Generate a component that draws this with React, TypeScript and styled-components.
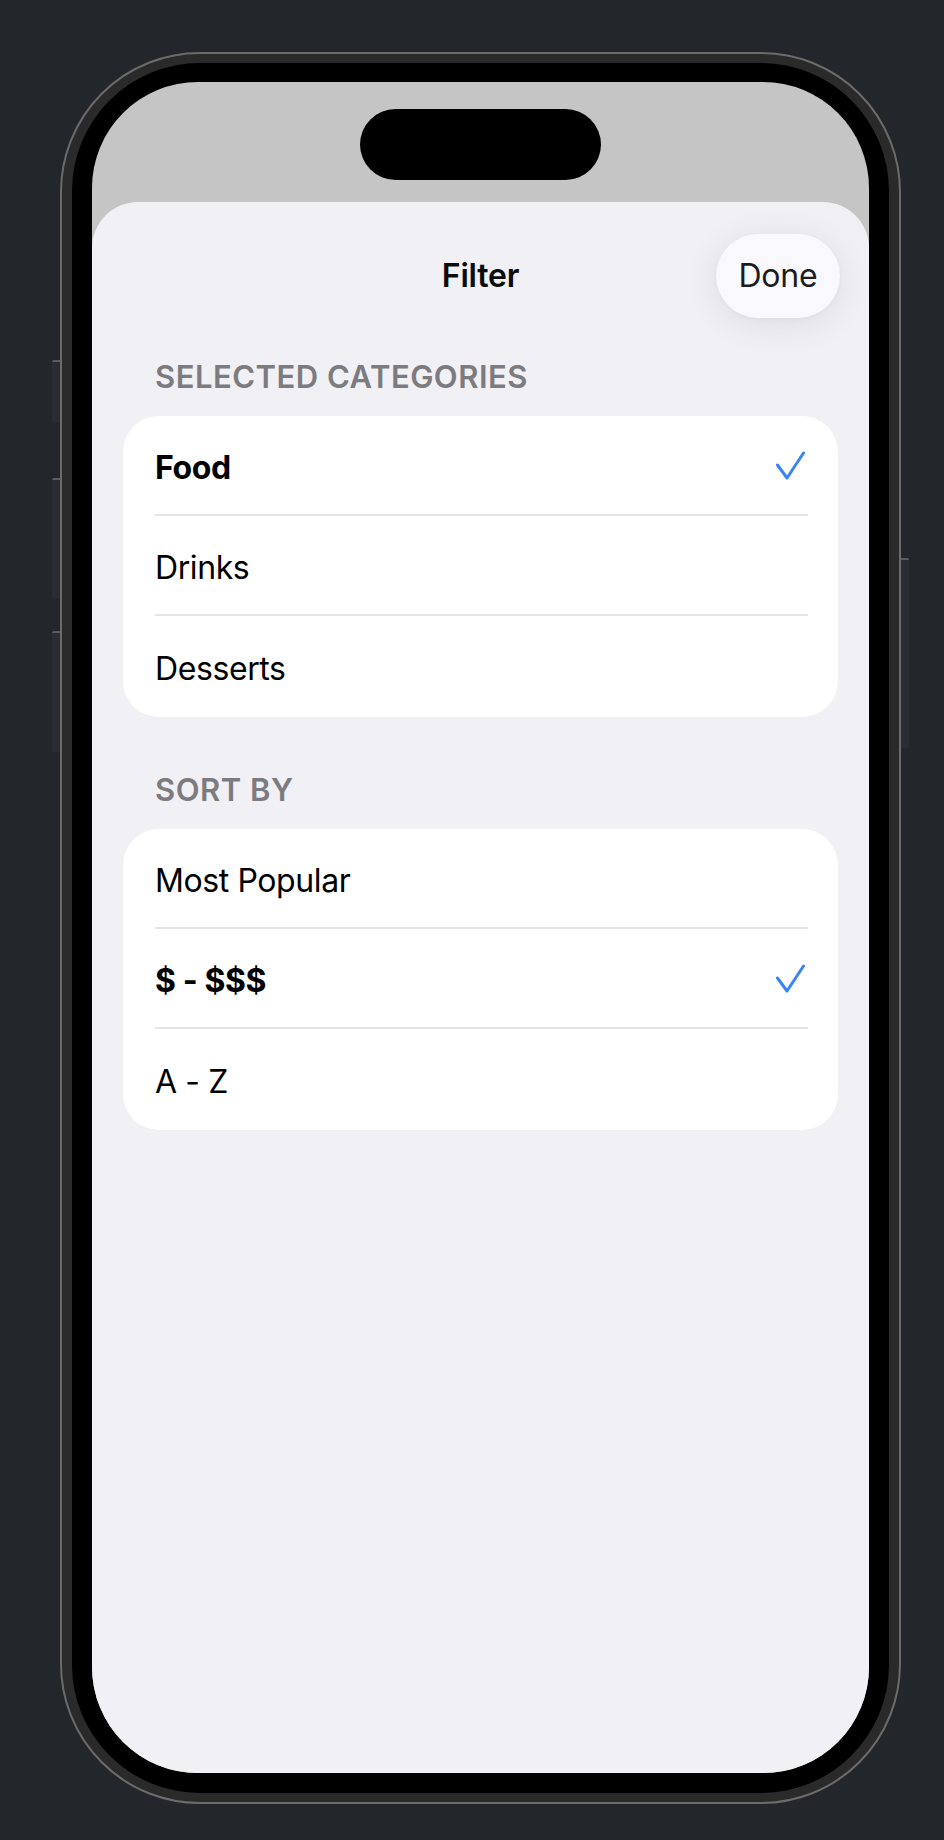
import React from "react";
import styled, { createGlobalStyle } from "styled-components";

const GlobalStyle = createGlobalStyle`
  html, body {
    margin: 0;
    padding: 0;
    background: #23272b;
  }
  * { box-sizing: border-box; }
`;

const Page = styled.div`
  width: 944px;
  height: 1840px;
  padding: 52px 0 0 60px;
  background: #23272b;
  font-family: Inter, "Noto Sans", sans-serif;
`;

const Phone = styled.div`
  position: relative;
  width: 841px;
  height: 1752px;
  border: 2px solid #6b6b6b;
  border-radius: 140px;
  background: #2a2a2a;
  padding: 9px 10px;
`;

const SideButton = styled.div<{ $side: "left" | "right"; $top: number; $h: number }>`
  position: absolute;
  top: ${(p) => p.$top}px;
  ${(p) => (p.$side === "left" ? "left: -10px;" : "right: -10px;")}
  width: 8px;
  height: ${(p) => p.$h}px;
  background: #2a2d31;
  border-top: 2px solid #5a5c60;
  border-radius: ${(p) => (p.$side === "left" ? "2px 0 0 2px" : "0 2px 2px 0")};
`;

const Bezel = styled.div`
  height: 100%;
  background: #000;
  border-radius: 128px;
  padding: 19px 20px 20px;
`;

const Screen = styled.div`
  height: 100%;
  border-radius: 106px;
  overflow: hidden;
  background: #c5c5c5;
  display: flex;
  flex-direction: column;
  align-items: center;
`;

const Island = styled.div`
  margin-top: 27px;
  width: 241px;
  height: 71px;
  border-radius: 36px;
  background: #000;
  flex-shrink: 0;
`;

const Sheet = styled.div`
  margin-top: 22px;
  align-self: stretch;
  flex: 1;
  background: #f0f0f5;
  border-radius: 46px 46px 0 0;
  padding: 31px 31px 0;
  display: flex;
  flex-direction: column;
`;

const NavBar = styled.div`
  display: grid;
  grid-template-columns: 1fr auto 1fr;
  align-items: center;
  height: 85px;
`;

const Title = styled.div`
  grid-column: 2;
  font-size: 32px;
  font-weight: 600;
  color: #0b0b0c;
  letter-spacing: -0.2px;
`;

const DoneButton = styled.button`
  grid-column: 3;
  justify-self: end;
  margin-right: -2px;
  width: 124px;
  height: 84px;
  border: none;
  border-radius: 42px;
  background: #f9f9fd;
  box-shadow: 0 6px 34px rgba(0, 0, 0, 0.09), 0 1px 4px rgba(0, 0, 0, 0.03);
  font-family: Inter, "Noto Sans", sans-serif;
  font-size: 32px;
  font-weight: 400;
  color: #1c1c1e;
  letter-spacing: -0.2px;
  padding: 0;
`;

const SectionLabel = styled.div<{ $gap: number }>`
  margin-top: ${(p) => p.$gap}px;
  padding-left: 32px;
  font-size: 31px;
  line-height: 38px;
  font-weight: 600;
  color: #7b7b80;
  text-transform: uppercase;
  letter-spacing: 0.5px;
`;

const Card = styled.div`
  margin-top: 20px;
  background: #fff;
  border-radius: 36px;
  overflow: hidden;
`;

const Row = styled.div`
  padding-left: 32px;
`;

const RowInner = styled.div<{ $last: boolean }>`
  height: ${(p) => (p.$last ? 101 : 100)}px;
  margin-right: 30px;
  padding-top: 4px;
  display: flex;
  align-items: center;
  justify-content: space-between;
  border-bottom: ${(p) => (p.$last ? "none" : "2px solid #e4e4e9")};
`;

const RowText = styled.span<{ $selected: boolean }>`
  font-size: 32px;
  font-weight: ${(p) => (p.$selected ? 700 : 400)};
  color: #000;
  letter-spacing: -0.4px;
`;

const Check = styled.svg`
  width: 30px;
  height: 30px;
  margin-right: 3px;
  margin-top: -4px;
  flex-shrink: 0;
`;

const CheckIcon = () => (
  <Check viewBox="0 0 30 30">
    <polyline
      points="2.5,15 12,28 28.5,3"
      fill="none"
      stroke="#3a84f7"
      strokeWidth="3"
      strokeLinecap="round"
      strokeLinejoin="round"
    />
  </Check>
);

type Item = { label: string; selected: boolean };

const categories: Item[] = [
  { label: "Food", selected: true },
  { label: "Drinks", selected: false },
  { label: "Desserts", selected: false },
];

const sorts: Item[] = [
  { label: "Most Popular", selected: false },
  { label: "$ - $$$", selected: true },
  { label: "A - Z", selected: false },
];

const List = ({ items }: { items: Item[] }) => (
  <Card>
    {items.map((it, i) => (
      <Row key={it.label}>
        <RowInner $last={i === items.length - 1}>
          <RowText $selected={it.selected}>{it.label}</RowText>
          {it.selected && <CheckIcon />}
        </RowInner>
      </Row>
    ))}
  </Card>
);

export default function App() {
  return (
    <>
      <GlobalStyle />
      <Page>
        <Phone>
          <SideButton $side="left" $top={306} $h={62} />
          <SideButton $side="left" $top={424} $h={120} />
          <SideButton $side="left" $top={577} $h={121} />
          <SideButton $side="right" $top={504} $h={190} />
          <Bezel>
            <Screen>
              <Island />
              <Sheet>
                <NavBar>
                  <Title>Filter</Title>
                  <DoneButton>Done</DoneButton>
                </NavBar>
                <SectionLabel $gap={40}>Selected Categories</SectionLabel>
                <List items={categories} />
                <SectionLabel $gap={54}>Sort By</SectionLabel>
                <List items={sorts} />
              </Sheet>
            </Screen>
          </Bezel>
        </Phone>
      </Page>
    </>
  );
}
